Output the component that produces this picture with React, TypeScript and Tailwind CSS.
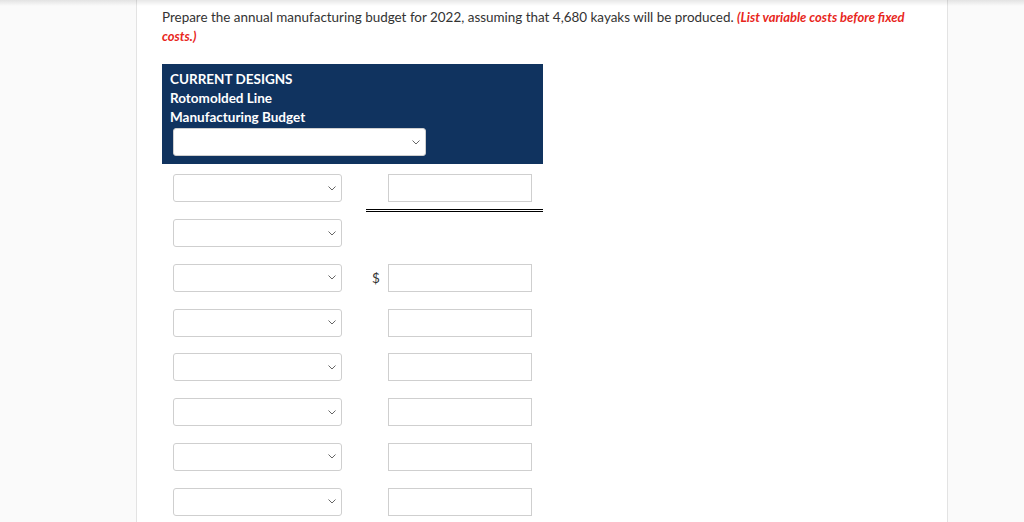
import React from "react";

function Chevron() {
  return (
    <svg width="8" height="5" viewBox="0 0 8 5" className="shrink-0">
      <path d="M0.5 0.5 L4 4 L7.5 0.5" fill="none" stroke="#666" strokeWidth="1" />
    </svg>
  );
}

function Select({ w }: { w: string }) {
  return (
    <div className={`${w} h-[28px] bg-white border border-[#cfcfcf] rounded-[3px] flex items-center justify-end pr-[5px]`}>
      <Chevron />
    </div>
  );
}

function Input() {
  return <div className="w-[144px] h-[28px] bg-white border border-[#cfcfcf]" />;
}

function Row({ dollar, first, noInput }: { dollar?: boolean; first?: boolean; noInput?: boolean }) {
  return (
    <div className="flex items-start">
      <div className="w-[204px] pl-[11px]">
        <Select w="w-[169px]" />
      </div>
      {!noInput && (
        <div
          className={`w-[177px] flex items-center ${
            first ? "pb-[7px] border-b-[3px] border-double border-black" : ""
          }`}
        >
          <div className="w-[22px] pl-[6px] text-[13.5px] text-[#333]">{dollar ? "$" : ""}</div>
          <Input />
        </div>
      )}
    </div>
  );
}

export default function App() {
  return (
    <div
      className="w-[1024px] h-[522px] bg-[#fafafa] relative overflow-hidden"
      style={{ fontFamily: "Lato, 'Noto Sans', sans-serif" }}
    >
      <div className="ml-[136px] w-[812px] h-full bg-white border-x border-[#e3e3e3] pl-[25px] pt-[8px]">
        <p className="text-[13.45px] leading-[19px] text-[#333] w-[760px]">
          Prepare the annual manufacturing budget for 2022, assuming that 4,680 kayaks will be produced.{" "}
          <span className="text-[#e8261c] font-bold italic text-[13px]">(List variable costs before fixed costs.)</span>
        </p>
        <div className="mt-[18px] w-[381px] bg-[#10335f] pt-[6px] pb-[8px]">
          <div className="pl-[8px] text-white font-bold text-[13.5px] leading-[19px]">
            <div>CURRENT DESIGNS</div>
            <div>Rotomolded Line</div>
            <div>Manufacturing Budget</div>
          </div>
          <div className="pl-[11px] mt-[1px]">
            <Select w="w-[253px]" />
          </div>
        </div>
        <div className="mt-[10px] flex flex-col">
          <Row first />
          <div className="mt-[7px] flex flex-col gap-[16.8px]">
            <Row noInput />
            <Row dollar />
            <Row />
            <Row />
            <Row />
            <Row />
            <Row />
          </div>
        </div>
      </div>
      <div className="absolute left-0 top-0 w-full h-[6px] bg-gradient-to-b from-[#00000018] to-transparent" />
    </div>
  );
}
